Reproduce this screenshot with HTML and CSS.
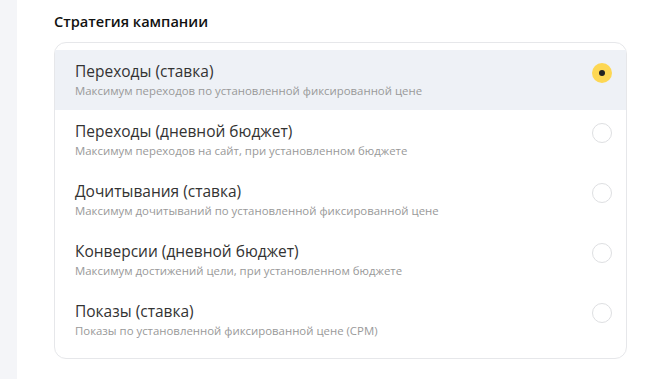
FILE: index.html
```html
<!DOCTYPE html>
<html lang="ru">
<head>
<meta charset="utf-8">
<link rel="stylesheet" href="styles.css">
</head>
<body>
<div class="page">
  <aside class="strip"></aside>
  <main class="main">
    <h2 class="heading">Стратегия кампании</h2>
    <div class="card">
      <label class="row row--active">
        <div class="text">
          <div class="title">Переходы (ставка)</div>
          <div class="sub">Максимум переходов по установленной фиксированной цене</div>
        </div>
        <span class="radio radio--on"><span class="dot"></span></span>
      </label>
      <label class="row">
        <div class="text">
          <div class="title">Переходы (дневной бюджет)</div>
          <div class="sub">Максимум переходов на сайт, при установленном бюджете</div>
        </div>
        <span class="radio"></span>
      </label>
      <label class="row">
        <div class="text">
          <div class="title">Дочитывания (ставка)</div>
          <div class="sub">Максимум дочитываний по установленной фиксированной цене</div>
        </div>
        <span class="radio"></span>
      </label>
      <label class="row">
        <div class="text">
          <div class="title">Конверсии (дневной бюджет)</div>
          <div class="sub">Максимум достижений цели, при установленном бюджете</div>
        </div>
        <span class="radio"></span>
      </label>
      <label class="row">
        <div class="text">
          <div class="title">Показы (ставка)</div>
          <div class="sub">Показы по установленной фиксированной цене (CPM)</div>
        </div>
        <span class="radio"></span>
      </label>
    </div>
  </main>
</div>
</body>
</html>
```

FILE: styles.css
```css
* { box-sizing: border-box; }
html, body { margin: 0; padding: 0; background: #fff; }
body { font-family: "Open Sans", "Noto Sans", sans-serif; color: #222; }
.page { display: flex; min-height: 379px; }
.strip { width: 17px; flex: none; background: #f4f5f8; }
.main { flex: 1; padding: 11px 0 0 37px; }
.heading {
  margin: 0 0 11px;
  font-size: 14.6px;
  line-height: 20px;
  font-weight: 600;
  color: #111;
}
.card {
  width: 573px;
  border: 1px solid #e6e7ea;
  border-radius: 12px;
  padding: 7px 0 8px;
}
.row {
  height: 60px;
  display: flex;
  align-items: center;
  justify-content: space-between;
  padding: 0 14px 0 20px;
}
.row--active { background: #eef1f6; }
.text { display: flex; flex-direction: column; gap: 2px; padding-bottom: 2px; }
.title { font-size: 15.5px; line-height: 20px; color: #333; }
.sub { font-size: 11.4px; line-height: 15px; color: #999; }
.radio {
  width: 20px; height: 20px;
  border-radius: 50%;
  border: 1px solid #dedfe2;
  display: flex; align-items: center; justify-content: center;
  margin-top: -14px;
}
.radio--on { background: #fdd753; border: none; }
.dot { width: 6px; height: 6px; border-radius: 50%; background: #222; }
```
